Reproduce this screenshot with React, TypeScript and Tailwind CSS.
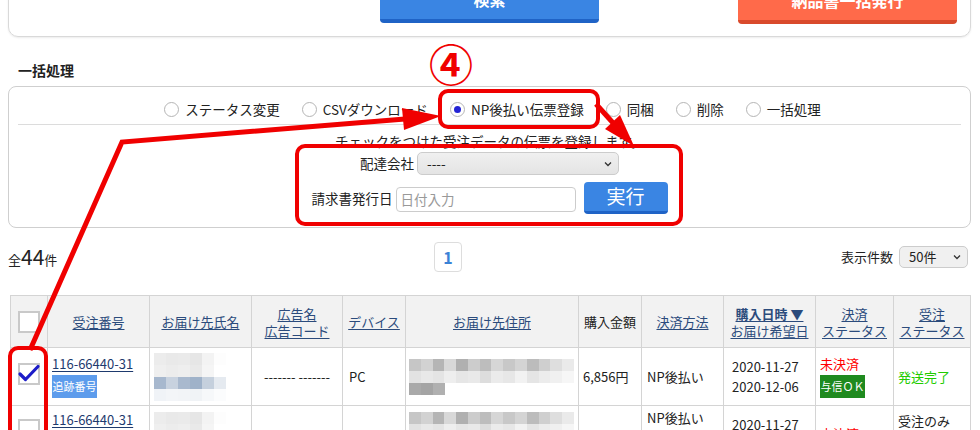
import React from 'react';

const nameRows = [
  ['#ececec', '#e9e9e9', '#eaeaea', '#e6e6e6', '#f3f3f3', '#fdfdfd'],
  ['#efefef', '#ececec', '#eeeeee', '#e9e9e9', '#f5f5f5', '#ffffff'],
  ['#a7b8ce', '#c8d2df', '#a9b9ce', '#9fb2c9', '#c5d0dd', '#e5eaf0'],
  ['#f0f3f7', '#f3f5f8', '#f2f4f7', '#f0f3f6', '#f6f8fa', '#fbfcfd'],
];

const addrRows = [
  ['#c6c6c6', '#d2d2d2', '#b5b5b5', '#d8d8d8', '#b0b0b0', '#cccccc', '#bdbdbd', '#d6d6d6', '#c8c8c8', '#d4d4d4', '#bcbcbc', '#cfcfcf', '#dedede', '#eaeaea'],
  ['#e2e2e2', '#e8e8e8', '#e4e4e4', '#eeeeee', '#e6e6e6', '#e9e9e9', '#dddddd', '#ebebeb', '#e7e7e7', '#f2f2f2', '#e5e5e5', '#ececec', '#f0f0f0', '#f6f6f6'],
  ['#a9a9a9', '#a4a4a4', '#b0b0b0'],
];

const Mosaic = ({ rows }: { rows: string[][] }) => (
  <div className="flex flex-col">
    {rows.map((r, i) => (
      <div key={i} className="flex">
        {r.map((c, j) => (
          <div key={j} className="w-[12px] h-[12px]" style={{ backgroundColor: c }} />
        ))}
      </div>
    ))}
  </div>
);

const Radio = ({ label, checked }: { label: string; checked?: boolean }) => (
  <div className="flex items-center gap-[6px]">
    <span className="w-[15px] h-[15px] rounded-full border border-[#b5b5b5] bg-white flex items-center justify-center">
      {checked && <span className="w-[7px] h-[7px] rounded-full bg-[#2424d4]" />}
    </span>
    <span>{label}</span>
  </div>
);

const Box = ({ checked }: { checked?: boolean }) => (
  <span className="w-[22px] h-[22px] border-[2px] border-[#c9c9c9] bg-white flex items-center justify-center">
    {checked && (
      <svg width="22" height="22" viewBox="0 0 22 22" className="overflow-visible">
        <path d="M2 11 L7.5 16.5 L20 3.5" stroke="#1c1cc8" strokeWidth="3.2" fill="none" strokeLinecap="round" strokeLinejoin="round" />
      </svg>
    )}
  </span>
);

const Chevron = () => (
  <svg width="8" height="6" viewBox="0 0 8 6">
    <path d="M1 1.5 L4 4.5 L7 1.5" stroke="#333" strokeWidth="1.3" fill="none" />
  </svg>
);

const Th = ({ children, link = true }: { children: React.ReactNode; link?: boolean }) => (
  <th className="border border-[#d4d4d4] bg-[#f2f2f2] font-normal text-center align-middle leading-[17px] px-[2px]">
    <span className={link ? 'text-[#2b4b7c] underline underline-offset-2' : 'text-[#222]'}>{children}</span>
  </th>
);

const Td = ({ children, className = '' }: { children?: React.ReactNode; className?: string }) => (
  <td className={`border border-[#d4d4d4] px-[4px] ${className}`}>{children}</td>
);

export default function App() {
  return (
    <div className="relative w-[980px] h-[430px] overflow-hidden bg-white text-[#222] text-[13px] font-['Noto_Sans_CJK_JP',sans-serif]">
      {/* search panel (cut at top) */}
      <div className="ml-[8px] mr-[9px] -mt-[30px] h-[67px] border border-[#d9d9d9] rounded-b-[10px] shadow-[0_1px_2px_rgba(0,0,0,0.08)] pt-[8px] pl-[371px] flex items-start">
        <button className="w-[219px] h-[44px] bg-[#3a85e3] border-b-[4px] border-[#1f63c6] rounded-[4px] text-white font-bold text-[16px]">検索</button>
        <button className="ml-[139px] w-[219px] h-[45px] bg-[#ff6a4a] border-b-[4px] border-[#d94a2c] rounded-[4px] text-white font-bold text-[16px]">納品書一括発行</button>
      </div>

      <div className="mt-[23px] ml-[18px] h-[20px] leading-[20px] font-bold text-[14px]">一括処理</div>

      {/* bulk panel */}
      <div className="mt-[6px] ml-[8px] mr-[9px] h-[142px] border border-[#cfcfcf] rounded-[8px] pt-[12px]">
        <div className="h-[20px] flex justify-center items-center gap-[22px] text-[13.5px] pl-[6px]">
          <Radio label="ステータス変更" />
          <Radio label="CSVダウンロード" />
          <Radio label="NP後払い伝票登録" checked />
          <Radio label="同梱" />
          <Radio label="削除" />
          <Radio label="一括処理" />
        </div>
        <div className="mt-[5px] mx-[9px] border-t border-[#dcdcdc]" />
        <div className="mt-[6px] h-[20px] leading-[20px] text-center text-[13.5px]">チェックをつけた受注データの伝票を登録します。</div>
        <div className="mt-[1px] h-[23px] flex justify-center items-center gap-[3px] text-[13.5px]">
          <span>配達会社</span>
          <div className="w-[202px] h-[23px] rounded-[5px] border border-[#cccccc] bg-gradient-to-b from-[#f0f0f0] to-[#e4e4e4] flex items-center justify-between pl-[9px] pr-[6px]">
            <span>----</span>
            <Chevron />
          </div>
        </div>
        <div className="mt-[7px] h-[32px] flex justify-center items-center text-[13.5px]">
          <span>請求書発行日</span>
          <div className="ml-[3px] mt-[3px] w-[180px] h-[25px] rounded-[4px] border border-[#cccccc] bg-white flex items-center pl-[4px] text-[#999]">日付入力</div>
          <button className="ml-[8px] w-[84px] h-[32px] rounded-[4px] bg-[#3a85e3] border-b-[3px] border-[#1f63c6] text-white text-[19px]">実行</button>
        </div>
      </div>

      {/* count / pagination */}
      <div className="mt-[14px] ml-[8px] mr-[12px] h-[30px] flex items-center">
        <div className="w-[426px] flex items-baseline">
          <span>全</span>
          <span className="text-[21px] leading-[24px]">44</span>
          <span>件</span>
        </div>
        <div className="w-[28px] h-[30px] border border-[#dddddd] rounded-[4px] flex items-center justify-center text-[#3b82d6] font-bold text-[16px]">1</div>
        <div className="flex-1 flex justify-end items-center gap-[6px]">
          <span>表示件数</span>
          <div className="w-[69px] h-[22px] rounded-[5px] border border-[#cccccc] bg-[#f0f0f0] flex items-center justify-between pl-[9px] pr-[6px]">
            <span>50件</span>
            <Chevron />
          </div>
        </div>
      </div>

      {/* orders table */}
      <table className="mt-[23px] ml-[10px] w-[960px] table-fixed border-collapse">
        <colgroup>
          <col className="w-[37px]" />
          <col className="w-[102px]" />
          <col className="w-[102px]" />
          <col className="w-[91px]" />
          <col className="w-[63px]" />
          <col className="w-[173px]" />
          <col className="w-[63px]" />
          <col className="w-[82px]" />
          <col className="w-[92px]" />
          <col className="w-[78px]" />
          <col className="w-[77px]" />
        </colgroup>
        <thead>
          <tr className="h-[52px]">
            <th className="border border-[#d4d4d4] bg-[#f2f2f2]">
              <div className="flex justify-center"><Box /></div>
            </th>
            <Th>受注番号</Th>
            <Th>お届け先氏名</Th>
            <Th>広告名<br />広告コード</Th>
            <Th>デバイス</Th>
            <Th>お届け先住所</Th>
            <Th link={false}>購入金額</Th>
            <Th>決済方法</Th>
            <Th><span className="font-bold">購入日時 ▼</span><br />お届け希望日</Th>
            <Th>決済<br />ステータス</Th>
            <Th>受注<br />ステータス</Th>
          </tr>
        </thead>
        <tbody>
          <tr className="h-[58px] align-middle">
            <td className="border border-[#d4d4d4]">
              <div className="flex justify-center mb-[6px]"><Box checked /></div>
            </td>
            <Td>
              <div className="text-[#1e3a6e] underline underline-offset-2 leading-[16px]">116-66440-31</div>
              <div className="mt-[3px] w-[45px] h-[23px] bg-[#5d9cec] text-white text-[11px] flex items-center justify-center">追跡番号</div>
            </Td>
            <Td><Mosaic rows={nameRows} /></Td>
            <Td className="text-center">------- -------</Td>
            <Td className="pl-[6px]">PC</Td>
            <Td className="pl-[3px]"><Mosaic rows={addrRows} /></Td>
            <Td>6,856円</Td>
            <Td className="pl-[5px]">NP後払い</Td>
            <Td className="pl-[8px] leading-[20px]">
              <div>2020-11-27</div>
              <div>2020-12-06</div>
            </Td>
            <Td>
              <div className="text-[#ff0000] leading-[18px]">未決済</div>
              <div className="mt-[2px] w-[45px] h-[23px] bg-[#1f8a1f] text-white text-[11px] flex items-center justify-center">与信ＯＫ</div>
            </Td>
            <Td className="text-[#22cc00]">発送完了</Td>
          </tr>
          <tr className="h-[80px] align-top">
            <td className="border border-[#d4d4d4] pt-[13px]">
              <div className="flex justify-center"><Box /></div>
            </td>
            <Td className="pt-[5px]">
              <div className="text-[#1e3a6e] underline underline-offset-2 leading-[18px]">116-66440-31</div>
            </Td>
            <Td className="pt-[6px]"><Mosaic rows={nameRows} /></Td>
            <Td />
            <Td className="pl-[6px] pt-[26px]">PC</Td>
            <Td className="pl-[3px] pt-[6px]"><Mosaic rows={addrRows} /></Td>
            <Td className="pt-[26px]">4,980円</Td>
            <Td className="pl-[5px] pt-[3px] leading-[18px]">NP後払い</Td>
            <Td className="pl-[8px] pt-[9px] leading-[20px]">2020-11-27</Td>
            <Td className="pt-[19px] text-[#ff0000] leading-[18px]">未決済</Td>
            <Td className="pt-[6px] leading-[18px]">受注のみ</Td>
          </tr>
        </tbody>
      </table>

      {/* red annotations */}
      <div className="absolute left-[429px] top-[39px] text-[44px] leading-[48px] font-bold text-[#f00000]">④</div>
      <svg className="absolute left-0 top-0 pointer-events-none" width="980" height="430" viewBox="0 0 980 430">
        <g fill="none" stroke="#f00000" strokeWidth="4">
          <rect x="440" y="91" width="158" height="36" rx="8" />
          <rect x="297" y="146" width="384" height="78" rx="8" />
          <rect x="10" y="348" width="36" height="110" rx="8" />
        </g>
        <polyline points="30,350 122,142 405,119" fill="none" stroke="#f00000" strokeWidth="5" strokeLinejoin="miter" />
        <polygon points="441,116 404,130 402,108" fill="#f00000" />
        <line x1="596" y1="104" x2="614" y2="124" stroke="#f00000" strokeWidth="5" />
        <polygon points="634,146 605,129 620,115" fill="#f00000" />
      </svg>
    </div>
  );
}
